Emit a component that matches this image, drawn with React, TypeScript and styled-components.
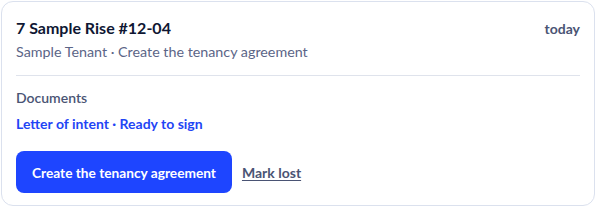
import React from "react";
import styled, { createGlobalStyle } from "styled-components";

const Global = createGlobalStyle`
  html, body { margin: 0; padding: 0; background: #ffffff; }
  body { padding: 1px; font-family: Lato, "Noto Sans", sans-serif; }
  * { box-sizing: border-box; }
`;

const Card = styled.div`
  width: 594px;
  height: 205px;
  border: 1px solid #dbe1ee;
  border-radius: 12px;
  background: #fff;
  padding: 15px 14px 12px 14px;
  display: flex;
  flex-direction: column;
`;

const Header = styled.div`
  display: flex;
  justify-content: space-between;
  align-items: baseline;
`;

const Title = styled.div`
  font-size: 16px;
  font-weight: 700;
  color: #0f1733;
  line-height: 22px;
`;

const When = styled.div`
  font-size: 14px;
  font-weight: 700;
  color: #4a5474;
`;

const Sub = styled.div`
  margin-top: 3px;
  font-size: 14.3px;
  color: #5b6587;
  line-height: 20px;
`;

const Divider = styled.hr`
  border: none;
  border-top: 1px solid #dfe3ec;
  margin: 13px 0 12px 0;
`;

const Label = styled.div`
  font-size: 14px;
  font-weight: 600;
  color: #4a5474;
  line-height: 20px;
`;

const DocLink = styled.div`
  margin-top: 6px;
  font-size: 14px;
  font-weight: 700;
  color: #1f45f5;
  line-height: 20px;
`;

const Actions = styled.div`
  margin-top: 17px;
  display: flex;
  align-items: center;
  gap: 10px;
`;

const Primary = styled.button`
  height: 42px;
  padding: 0 16px;
  border: none;
  border-radius: 8px;
  background: #1e45ff;
  color: #fff;
  font-family: inherit;
  font-size: 13.7px;
  font-weight: 700;
`;

const LinkButton = styled.button`
  border: none;
  background: none;
  padding: 0;
  font-family: inherit;
  font-size: 14px;
  font-weight: 700;
  color: #4a5474;
  text-decoration: underline;
  text-underline-offset: 2px;
`;

export default function App() {
  return (
    <>
      <Global />
      <Card>
        <Header>
          <Title>7 Sample Rise #12-04</Title>
          <When>today</When>
        </Header>
        <Sub>Sample Tenant · Create the tenancy agreement</Sub>
        <Divider />
        <Label>Documents</Label>
        <DocLink>Letter of intent · Ready to sign</DocLink>
        <Actions>
          <Primary>Create the tenancy agreement</Primary>
          <LinkButton>Mark lost</LinkButton>
        </Actions>
      </Card>
    </>
  );
}
